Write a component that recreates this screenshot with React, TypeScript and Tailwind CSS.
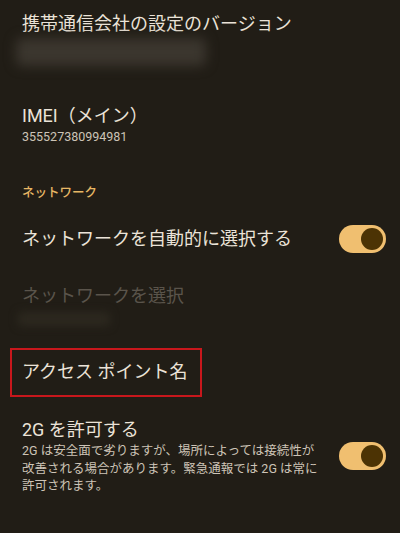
const font = "font-['Roboto','Noto_Sans_CJK_JP',sans-serif]";

function Toggle() {
  return (
    <div className="w-[47px] h-[28px] rounded-full bg-[#f0bf70] flex items-center justify-end pr-[3px] shrink-0">
      <div className="w-[22px] h-[22px] rounded-full bg-[#4c3304]" />
    </div>
  );
}

export default function App() {
  return (
    <div className={`w-[400px] h-[533px] bg-[#211d16] overflow-hidden ${font}`}>
      {/* Carrier version */}
      <div className="pl-[22px] pt-[12px]">
        <div className="text-[18px] leading-[24px] text-[#ebe3d8]">
          携帯通信会社の設定のバージョン
        </div>
      </div>
      <div className="ml-[16px] mt-[2px] h-[28px] w-[190px] rounded-md bg-[#3b362e] blur-[6px]" />

      {/* IMEI */}
      <div className="pl-[22px] mt-[38px]">
        <div className="text-[18px] leading-[24px] text-[#ebe3d8]">IMEI（メイン）</div>
        <div className="text-[12.5px] leading-[18px] text-[#cdc4b7]">355527380994981</div>
      </div>

      {/* Network category */}
      <div className="pl-[22px] mt-[38px] text-[12.5px] leading-[18px] font-medium text-[#e7b765]">
        ネットワーク
      </div>

      <div className="pl-[22px] pr-[14px] mt-[23px] h-[28px] flex items-center justify-between">
        <span className="text-[18px] leading-[24px] text-[#ebe3d8]">
          ネットワークを自動的に選択する
        </span>
        <Toggle />
      </div>

      <div className="pl-[22px] mt-[31px]">
        <div className="text-[18px] leading-[24px] text-[#5a544b]">ネットワークを選択</div>
      </div>
      <div className="ml-[18px] mt-[4px] h-[14px] w-[92px] rounded bg-[#2c281f] blur-[4px]" />

      {/* Access point name (highlighted) */}
      <div className="ml-[10px] mt-[22px] w-[192px] border-2 border-[#c8171c] pl-[10px] pt-[10px] pb-[11px]">
        <div className="text-[18px] leading-[24px] text-[#ebe3d8]">アクセス ポイント名</div>
      </div>

      {/* Allow 2G */}
      <div className="pl-[22px] pr-[14px] mt-[21px] flex items-center justify-between">
        <div className="w-[300px]">
          <div className="text-[18px] leading-[24px] text-[#ebe3d8]">2G を許可する</div>
          <div className="text-[12.5px] leading-[17.5px] text-[#cdc4b7]">
            2G は安全面で劣りますが、場所によっては接続性が改善される場合があります。緊急通報では 2G は常に許可されます。
          </div>
        </div>
        <Toggle />
      </div>
    </div>
  );
}
